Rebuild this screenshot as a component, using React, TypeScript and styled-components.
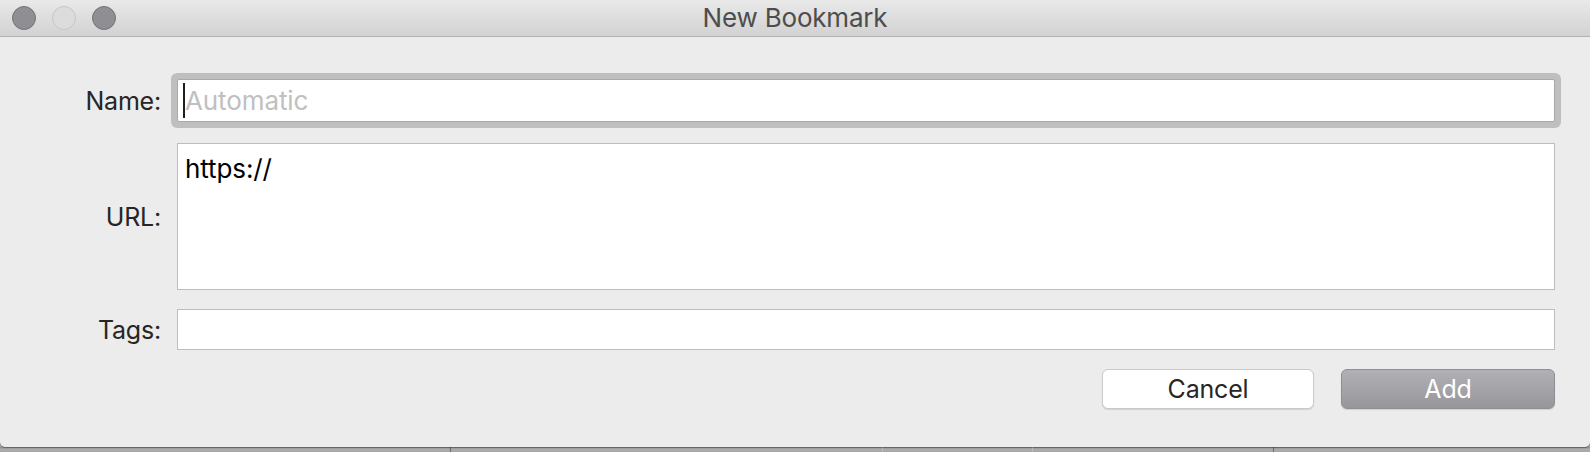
import styled, { createGlobalStyle } from "styled-components";

const GlobalStyle = createGlobalStyle`
  html, body {
    margin: 0;
    padding: 0;
    background: #a9a9a9;
  }
  body {
    font-family: Inter, "Noto Sans", "Liberation Sans", sans-serif;
    -webkit-font-smoothing: antialiased;
  }
`;

const Screen = styled.div`
  width: 1590px;
  height: 452px;
  display: flex;
  flex-direction: column;
  overflow: hidden;
`;

const Sheet = styled.div`
  height: 447px;
  display: flex;
  flex-direction: column;
  background: #ececec;
  border-radius: 0 0 5px 5px;
  box-shadow: 0 1px 1px rgba(0, 0, 0, 0.35);
  position: relative;
  z-index: 1;
`;

const TitleBar = styled.div`
  height: 36px;
  display: grid;
  grid-template-columns: 200px 1fr 200px;
  align-items: center;
  background: linear-gradient(#e9e9e9, #d2d2d2);
  border-bottom: 1px solid #b1b1b1;
`;

const Lights = styled.div`
  display: flex;
  gap: 16px;
  padding-left: 12px;
`;

const Light = styled.span<{ $dim?: boolean }>`
  width: 24px;
  height: 24px;
  border-radius: 50%;
  box-sizing: border-box;
  background: ${(p) => (p.$dim ? "#dcdcdc" : "#8f8e93")};
  border: 1px solid ${(p) => (p.$dim ? "#c6c6c6" : "#737276")};
`;

const Title = styled.div`
  text-align: center;
  font-size: 26px;
  line-height: 34px;
  color: #4d4d4d;
  letter-spacing: -0.2px;
`;

const Form = styled.div`
  display: flex;
  flex-direction: column;
  gap: 19px;
  padding: 42px 35px 0 0;
`;

const Row = styled.div<{ $after?: number }>`
  display: grid;
  grid-template-columns: 161px 1fr;
  column-gap: 16px;
  align-items: center;
  margin-bottom: ${(p) => p.$after ?? 0}px;
`;

const Label = styled.label`
  text-align: right;
  font-size: 25px;
  color: #262626;
  letter-spacing: -0.2px;
`;

const Field = styled.div<{ $h: number; $focus?: boolean }>`
  height: ${(p) => p.$h}px;
  box-sizing: border-box;
  background: #fff;
  border: 1px solid ${(p) => (p.$focus ? "#a9a9a9" : "#bdbdbd")};
  border-radius: ${(p) => (p.$focus ? "2px" : "0")};
  box-shadow: ${(p) => (p.$focus ? "0 0 0 6px #bfbfbf" : "none")};
  padding: ${(p) => (p.$focus ? "0 5px" : "10px 7px")};
  font-size: 26px;
  line-height: 30px;
  color: #000;
  display: flex;
  align-items: ${(p) => (p.$focus ? "center" : "flex-start")};
  letter-spacing: -0.1px;
`;

const Caret = styled.span`
  width: 2px;
  height: 35px;
  background: #1e1e1e;
`;

const Placeholder = styled.span`
  color: #c0c0c0;
`;

const Buttons = styled.div`
  display: flex;
  justify-content: flex-end;
  gap: 27px;
`;

const Button = styled.button<{ $primary?: boolean }>`
  width: ${(p) => (p.$primary ? 214 : 212)}px;
  height: 40px;
  box-sizing: border-box;
  border-radius: 6px;
  font-family: inherit;
  font-size: 25px;
  letter-spacing: -0.2px;
  padding: 0;
  color: ${(p) => (p.$primary ? "#fff" : "#262626")};
  background: ${(p) =>
    p.$primary ? "linear-gradient(#b1b0b5, #97969b)" : "#fff"};
  border: 1px solid ${(p) => (p.$primary ? "#8f8e93" : "#c9c9c9")};
  box-shadow: 0 1px 1px rgba(0, 0, 0, 0.12);
`;

const BackStrip = styled.div`
  flex: 1;
  display: flex;
  background: linear-gradient(#8c8c8c, #acacac 2px, #a7a7a7);
`;

const Segment = styled.div<{ $w: number; $dark?: boolean; $first?: boolean }>`
  width: ${(p) => p.$w}px;
  border-left: ${(p) =>
    p.$first ? "none" : `1px solid ${p.$dark ? "#6c6c6c" : "#bdbdbd"}`};
`;

export default function App() {
  return (
    <Screen>
      <GlobalStyle />
      <Sheet>
        <TitleBar>
          <Lights>
            <Light />
            <Light $dim />
            <Light />
          </Lights>
          <Title>New Bookmark</Title>
          <div />
        </TitleBar>
        <Form>
          <Row $after={2}>
            <Label>Name:</Label>
            <Field $h={43} $focus>
              <Caret />
              <Placeholder>Automatic</Placeholder>
            </Field>
          </Row>
          <Row>
            <Label>URL:</Label>
            <Field $h={147}>https://</Field>
          </Row>
          <Row>
            <Label>Tags:</Label>
            <Field $h={41} />
          </Row>
          <Buttons>
            <Button>Cancel</Button>
            <Button $primary>Add</Button>
          </Buttons>
        </Form>
      </Sheet>
      <BackStrip>
        <Segment $w={451} $first />
        <Segment $w={432} $dark />
        <Segment $w={150} />
        <Segment $w={240} />
        <Segment $w={317} $dark />
      </BackStrip>
    </Screen>
  );
}
